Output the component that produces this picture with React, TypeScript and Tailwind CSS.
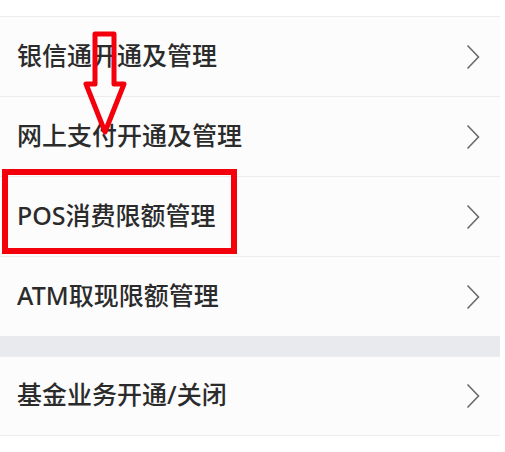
import React from 'react'

const Chevron = () => (
  <svg width="14" height="26" viewBox="0 0 14 26" fill="none" className="shrink-0">
    <path d="M1.5 1.5 L12.5 13 L1.5 24.5" stroke="#6b6b6b" strokeWidth="1.6" strokeLinejoin="miter" />
  </svg>
)

const Row = ({ label, last }: { label: string; last?: boolean }) => (
  <div
    className={
      'h-[80px] flex items-center justify-between pl-[17px] pr-[20px] border-t border-[#ececee] bg-[#fcfcfd]' +
      (last ? ' border-b' : '')
    }
  >
    <span className="text-[25px] leading-none font-medium text-[#2b2b2b] -mt-[3px]">{label}</span>
    <Chevron />
  </div>
)

export default function App() {
  return (
    <div
      className="relative w-[505px] h-[452px] bg-white overflow-hidden"
      style={{ fontFamily: '"Noto Sans", "Noto Sans CJK SC", sans-serif' }}
    >
      <div className="w-[500px]">
        <div className="h-[16px]" />
        <Row label="银信通开通及管理" />
        <Row label="网上支付开通及管理" />
        <Row label="POS消费限额管理" />
        <Row label="ATM取现限额管理" />
        <div className="h-[20px] bg-[#e8eaee]" />
        <Row label="基金业务开通/关闭" last />
      </div>

      {/* red highlight box */}
      <div className="absolute left-[2px] top-[169px] w-[235px] h-[85px] border-[6px] border-[#f4000c]" />

      {/* hollow arrow */}
      <svg className="absolute left-0 top-0" width="505" height="452" viewBox="0 0 505 452" fill="none">
        <polygon
          points="95,34 114,34 114,84 124,84 105,132 86,84 95,84"
          stroke="#f4000c"
          strokeWidth="5"
          strokeLinejoin="round"
        />
      </svg>
    </div>
  )
}
